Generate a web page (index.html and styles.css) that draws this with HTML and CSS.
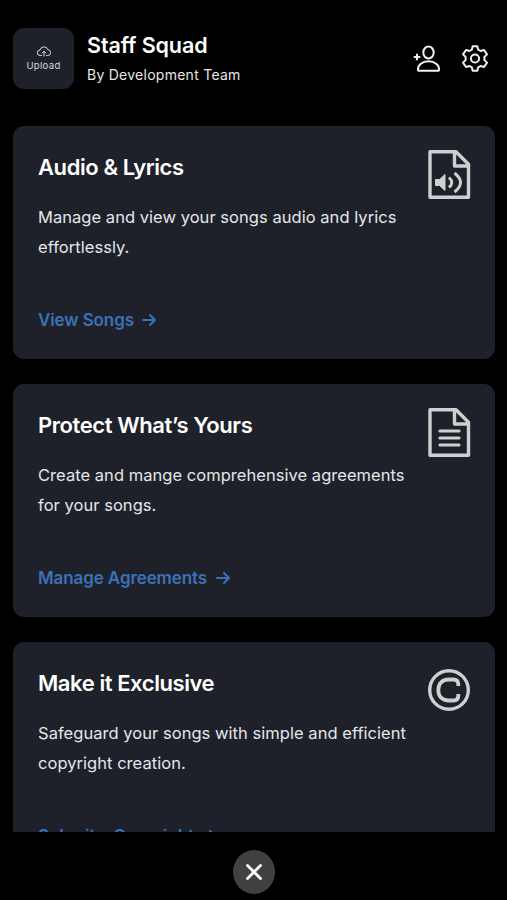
FILE: index.html
```html
<!DOCTYPE html>
<html lang="en">
<head>
<meta charset="utf-8">
<title>Staff Squad</title>
<link rel="stylesheet" href="styles.css">
</head>
<body>
<div class="app">
  <header class="header">
    <button class="upload">
      <svg width="14" height="11" viewBox="0 0 14 11" fill="none" stroke="currentColor" stroke-width="1" stroke-linecap="round" stroke-linejoin="round"><path d="M4.500 9.500H3.200A2.600 2.600 0 0 1 3 4a4 3.800 0 0 1 7.800-.3A2.900 2.900 0 0 1 10.700 9.500H9.500M7 10V5.300M5.200 7L7 5.200 8.800 7"/></svg>
      <span>Upload</span>
    </button>
    <div class="identity">
      <h1>Staff Squad</h1>
      <p>By Development Team</p>
    </div>
    <nav class="actions">
      <svg width="28" height="28" viewBox="0 0 28 28" fill="none" stroke="currentColor" stroke-width="2" stroke-linecap="round" stroke-linejoin="round"><ellipse cx="15.500" cy="7.500" rx="5.200" ry="6"/><path d="M5 25C4.500 20 9.500 16.300 15.500 16.300S26.500 20 26 25Q26 25.800 25.500 25.800H5.500Q5 25.800 5 25ZM4 9.500v5M1.500 12h5"/></svg>
      <svg width="28" height="28" viewBox="0 0 28 28" fill="none" stroke="currentColor" stroke-width="2" stroke-linejoin="round"><circle cx="14" cy="13.500" r="4.100"/><path d="M11.700 1.200h4.600l.9 3.500 2.300 1.300 3.500-1 3 4.400-2.600 2.500v3.200l2.600 2.500-3 4.400-3.500-1-2.300 1.300-.9 3.500h-4.600l-.9-3.500L8.500 21l-3.500 1-3-4.400 2.600-2.500v-3.200L2 9.400 5 5l3.500 1 2.300-1.300z"/></svg>
    </nav>
  </header>
  <main class="cards">
    <section class="card">
      <svg class="card-icon" width="44" height="50" viewBox="0 0 44 50" fill="none" stroke="currentColor" stroke-width="3.400" stroke-linejoin="round"><path d="M3 1.800h26l12.500 12.500v33H3zM27.500 2v14h14"/><path d="M8.500 29.500h4l5.500-5v16l-5.500-5h-4z" fill="currentColor" stroke-width="1"/><path d="M22 27.500q5.500 5 0 10M27.500 23q12 9.500 0 19" stroke-width="3"/></svg>
      <h2>Audio &amp; Lyrics</h2>
      <p>Manage and view your songs audio and lyrics<br>effortlessly.</p>
      <a class="link">View Songs <svg width="14" height="14" viewBox="0 0 14 14" fill="none" stroke="currentColor" stroke-width="2" stroke-linecap="round" stroke-linejoin="round"><path d="M1 7h12M8 2l5 5-5 5"/></svg></a>
    </section>
    <section class="card">
      <svg class="card-icon" width="44" height="50" viewBox="0 0 44 50" fill="none" stroke="currentColor" stroke-width="3.400" stroke-linejoin="round"><path d="M3 1.800h26l12.500 12.500v33H3zM27.500 2v14h14"/><path d="M13 23h19M13 30h19M13 37h19" stroke-linecap="round" stroke-width="3.200"/></svg>
      <h2>Protect What’s Yours</h2>
      <p>Create and mange comprehensive agreements<br>for your songs.</p>
      <a class="link">Manage Agreements <svg width="14" height="14" viewBox="0 0 14 14" fill="none" stroke="currentColor" stroke-width="2" stroke-linecap="round" stroke-linejoin="round"><path d="M1 7h12M8 2l5 5-5 5"/></svg></a>
    </section>
    <section class="card">
      <svg class="card-icon" width="44" height="50" viewBox="0 0 44 50" fill="none" stroke="currentColor" stroke-width="3.400"><circle cx="22" cy="24" r="19.300"/><path d="M31.300 20v-1.500q0-5-5-5h-4.500c-7 0-10.500 4.500-10.500 10.500s3.500 10.500 10.500 10.500h4.500q5 0 5-5v-1.500" stroke-width="3.800"/></svg>
      <h2>Make it Exclusive</h2>
      <p>Safeguard your songs with simple and efficient<br>copyright creation.</p>
      <a class="link">Submit a Copyright <svg width="14" height="14" viewBox="0 0 14 14" fill="none" stroke="currentColor" stroke-width="2" stroke-linecap="round" stroke-linejoin="round"><path d="M1 7h12M8 2l5 5-5 5"/></svg></a>
    </section>
  </main>
  <footer class="footer">
    <button class="close" aria-label="Close"><svg width="18" height="18" viewBox="0 0 18 18" fill="none" stroke="currentColor" stroke-width="2.800" stroke-linecap="round"><path d="M2.500 2.500l13 13M15.500 2.500l-13 13"/></svg></button>
  </footer>
</div>
</body>
</html>
```
FILE: styles.css
```css
* { box-sizing: border-box; }
body { margin: 0; background: #000; color: #fff; font-family: Inter, "Liberation Sans", sans-serif; }
h1, h2, p { margin: 0; }
button { border: 0; padding: 0; font: inherit; color: inherit; }
svg { display: block; flex: none; }
.app { height: 900px; display: flex; flex-direction: column; overflow: hidden; }
.header { flex: none; height: 125.500px; padding: 28px 18px 0 13px; display: flex; align-items: flex-start; }
.upload { width: 61px; height: 61px; border-radius: 11px; background: #1e212a; color: #d9dadd; display: flex; flex-direction: column; align-items: center; justify-content: center; gap: 2px; font-size: 9.500px; line-height: 13px; letter-spacing: .35px; }
.identity { margin-left: 13px; flex: 1; }
h1 { font-size: 21.500px; line-height: 28px; font-weight: 600; padding-top: 3px; letter-spacing: -.1px; }
.identity p { margin-top: 6px; font-size: 14px; line-height: 20px; color: #e6e6e6; letter-spacing: .26px; }
.actions { display: flex; gap: 20px; padding-top: 17px; color: #f0f0f0; }
.cards { flex: none; height: 706.500px; padding: 0 12.500px 0 13px; overflow: hidden; display: flex; flex-direction: column; gap: 25px; }
.card { position: relative; flex: none; height: 233px; padding: 26px 25px 0; border-radius: 11px; background: #1e2129; }
.card-icon { position: absolute; top: 24px; right: 24px; color: #cfcfcf; }
h2 { font-size: 22px; line-height: 31px; font-weight: 600; letter-spacing: -.42px; }
.card p { margin-top: 19px; font-size: 16.500px; line-height: 30.500px; color: #e5e6e9; letter-spacing: .04px; }
.link { margin-top: 44px; display: flex; align-items: center; gap: 8.500px; font-size: 17px; line-height: 26px; font-weight: 600; letter-spacing: -.1px; color: #3b71b9; }
.footer { flex: 1; display: flex; justify-content: center; padding-top: 18px; }
.close { width: 42px; height: 44px; border-radius: 50%; background: #414141; display: flex; align-items: center; justify-content: center; }
```
